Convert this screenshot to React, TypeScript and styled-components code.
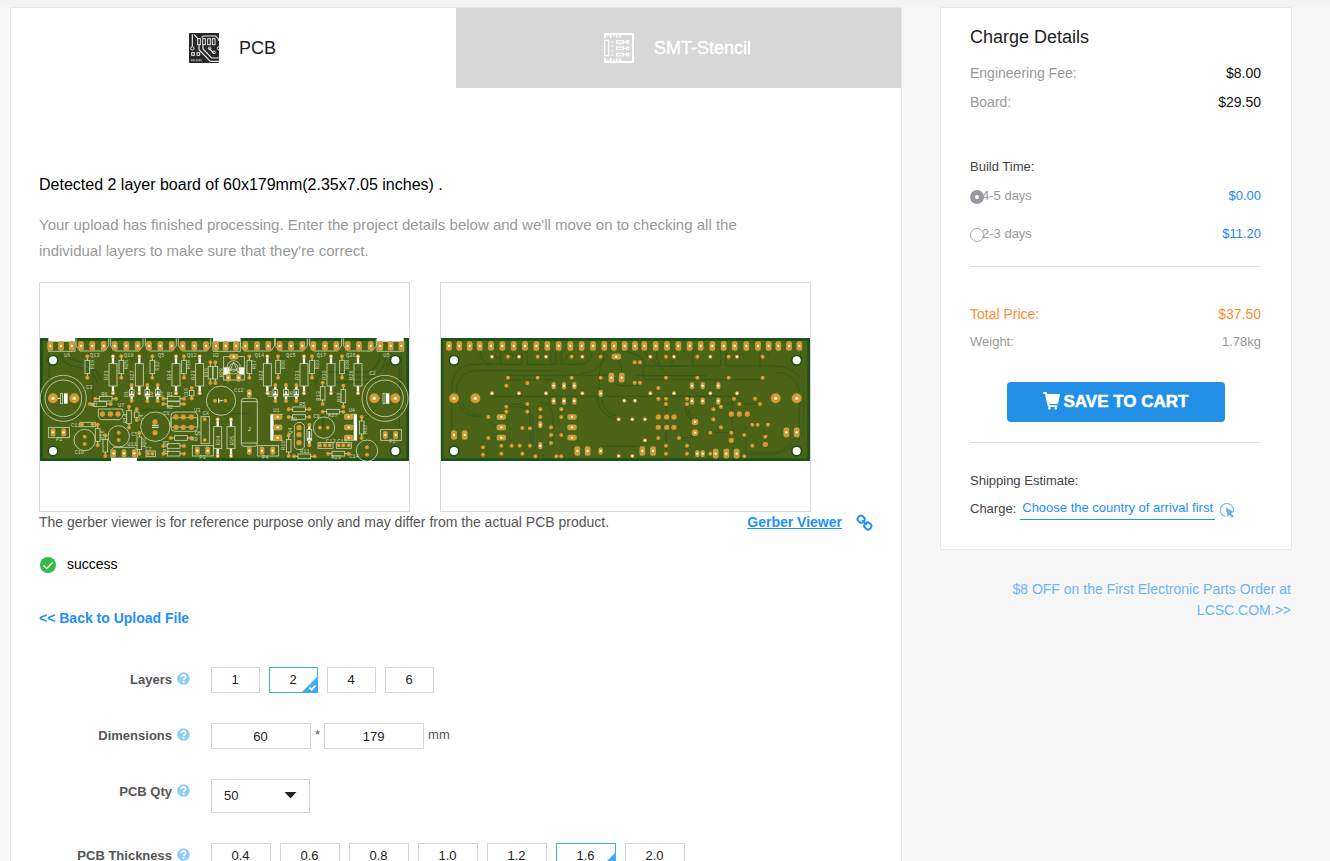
import React, { useState } from "react";
import styled, { createGlobalStyle } from "styled-components";

const GlobalStyle = createGlobalStyle`
  *, *::before, *::after { box-sizing: border-box; }
  body {
    margin: 0;
    background: #f6f6f6;
    color: #222;
    font-family: "Liberation Sans", Arial, Helvetica, sans-serif;
    font-size: 14px;
    line-height: 20px;
  }
  h1, h2, p { margin: 0; font-weight: 400; }
  button, input, select { font-family: inherit; }
`;

const TopStrip = styled.div`
  height: 7px;
  background: #f3f3f3;
`;

const Page = styled.div`
  display: grid;
  grid-template-columns: minmax(0, 1fr) 352px;
  gap: 38px;
  padding: 0 38px 0 10px;
  align-items: start;
`;

const Card = styled.section`
  background: #fff;
  border: 1px solid #e8e8e8;
`;

const Tabs = styled.nav`
  display: grid;
  grid-template-columns: 1fr 1fr;
`;

const Tab = styled.button<{ $active: boolean }>`
  display: flex;
  align-items: center;
  justify-content: center;
  gap: 20px;
  height: 80px;
  padding: 0 2px 0 0;
  border: 0;
  font-size: 18px;
  cursor: pointer;
  background: ${(p) => (p.$active ? "#fff" : "#d7d7d7")};
  color: ${(p) => (p.$active ? "#222" : "#fff")};
  -webkit-text-stroke: ${(p) => (p.$active ? "0" : "0.4px #fff")};
`;

const Content = styled.div`
  padding: 84px 28px 32px;
`;

const Detected = styled.h1`
  font-size: 16px;
  line-height: 26px;
  color: #000;
`;

const Intro = styled.p`
  max-width: 720px;
  margin-top: 14px;
  font-size: 15px;
  line-height: 26px;
  color: #999;
`;

const Previews = styled.div`
  display: flex;
  gap: 30px;
  margin-top: 18px;
`;

const Preview = styled.figure`
  display: flex;
  align-items: center;
  width: 371px;
  height: 230px;
  margin: 0;
  padding-top: 4px;
  border: 1px solid #d9d9d9;
  svg { display: block; width: 100%; }
`;

const ViewerRow = styled.div`
  display: flex;
  align-items: center;
  gap: 14px;
  color: #555;
  p { flex: 1; }
`;

const StrongLink = styled.a<{ $plain?: boolean }>`
  color: #1e90ff;
  font-weight: 700;
  text-decoration: ${(p) => (p.$plain ? "none" : "underline")};
`;

const Status = styled.p`
  display: flex;
  align-items: center;
  gap: 10px;
  margin: 22px 0 34px;
  color: #000;
  svg { margin-top: 2px; }
`;

const Form = styled.form`
  display: grid;
  gap: 30px;
  margin-top: 39px;
`;

const Row = styled.div`
  display: grid;
  grid-template-columns: 151px 1fr;
  column-gap: 21px;
  align-items: start;
`;

const RowLabel = styled.div`
  display: flex;
  align-items: center;
  justify-content: flex-end;
  gap: 5px;
  height: 26px;
  font-size: 13px;
  font-weight: 700;
  color: #555;
  svg { margin-bottom: 3px; }
`;

const Controls = styled.div<{ $gap: number }>`
  display: flex;
  align-items: center;
  gap: ${(p) => p.$gap}px;
  font-size: 13px;
  color: #555;
  span { padding-bottom: 2px; }
`;

const Option = styled.button<{ $width: number; $active: boolean }>`
  position: relative;
  width: ${(p) => p.$width}px;
  height: 26px;
  padding: 0 1px 2px 0;
  background: #fff;
  border: 1px solid ${(p) => (p.$active ? "#40a9f8" : "#d6d6d6")};
  font-size: 13px;
  color: #222;
  cursor: pointer;
  svg { position: absolute; right: -1px; bottom: -1px; }
`;

const SizeInput = styled.input`
  width: 100px;
  height: 26px;
  padding: 0 1px 0 0;
  border: 1px solid #d6d6d6;
  text-align: center;
  font-size: 13px;
  color: #222;
`;

const SelectBox = styled.div`
  position: relative;
  width: 99px;
  svg { position: absolute; right: 13px; top: 12px; pointer-events: none; }
`;

const Select = styled.select`
  appearance: none;
  display: block;
  width: 100%;
  height: 34px;
  padding: 0 12px 2px;
  border: 1px solid #d6d6d6;
  border-radius: 0;
  background: #fff;
  font-size: 13px;
  color: #222;
`;

const Summary = styled(Card)`
  padding: 18px 30px 29px 29px;
`;

const SummaryTitle = styled.h2`
  margin-bottom: 11px;
  font-size: 18px;
  line-height: 22px;
`;

const Line = styled.div<{ $tone?: "total" | "small" }>`
  display: flex;
  justify-content: space-between;
  line-height: ${(p) => (p.$tone ? 28 : 29)}px;
  font-size: ${(p) => (p.$tone === "small" ? 13 : 14)}px;
  color: ${(p) => (p.$tone === "total" ? "#ff8c2e" : "#999")};
  strong {
    font-weight: 400;
    color: ${(p) => (p.$tone ? "inherit" : "#111")};
  }
`;

const Fees = styled.div`
  margin-bottom: 40px;
`;

const SubTitle = styled.p`
  font-size: 13px;
  line-height: 20px;
  color: #444;
`;

const BuildOption = styled.label`
  display: flex;
  align-items: center;
  height: 38px;
  font-size: 13px;
  color: #999;
  cursor: pointer;
  b { margin-left: auto; font-weight: 400; color: #1e86f5; }
`;

const BuildTimes = styled.div`
  padding-bottom: 13px;
  border-bottom: 1px solid #e3e3e3;
`;

const Radio = styled.input`
  appearance: none;
  width: 14px;
  height: 14px;
  margin: 2px -2px 0 0;
  border: 1px solid #aaa;
  border-radius: 50%;
  background: #fff;
  &:checked { border: 5px solid #98989e; }
`;

const Totals = styled.div`
  padding: 33px 0 20px;
  border-bottom: 1px solid #e3e3e3;
`;

const SaveButton = styled.button`
  display: flex;
  align-items: center;
  justify-content: center;
  gap: 4px;
  width: 218px;
  height: 40px;
  margin: 26px auto 0;
  padding: 0;
  border: 0;
  border-radius: 4px;
  background: #2190e6;
  color: #fff;
  font-size: 17px;
  font-weight: 700;
  -webkit-text-stroke: 0.5px #fff;
  cursor: pointer;
  svg { margin-bottom: 3px; }
`;

const Shipping = styled.div`
  padding-top: 28px;
`;

const ChargeRow = styled.div`
  display: flex;
  align-items: center;
  margin-top: 6px;
  font-size: 13px;
  line-height: 22px;
  color: #444;
  svg { margin-left: 5px; margin-top: 4px; }
`;

const CountryLink = styled.a`
  margin-left: 4px;
  padding: 0 2px;
  border-bottom: 1px solid #1e90ff;
  color: #1e90ff;
  text-decoration: none;
`;

const Promo = styled.a`
  display: block;
  margin: 29px 1px 0 60px;
  line-height: 21px;
  text-align: right;
  text-decoration: none;
  color: #6cb4f8;
`;

/* ---------- icons ---------- */

const PcbIcon = () => (
  <svg width="30" height="30" viewBox="0 0 90 90" fill="none" stroke="#e9e9e9" strokeWidth="3.5">
    <rect width="90" height="90" rx="2" fill="#262626" stroke="none" />
    <path d="M10 4V40M15 5l12 12M38 14l5-5h37l8 8v6M30 36V50L64 85H90M42 36V48L68 75H90M66 52l9 10M60 46l8 8" />
    <g strokeWidth="3">
      <rect x="26" y="17" width="8" height="18" /><rect x="41" y="17" width="8" height="18" />
      <rect x="56" y="17" width="8" height="18" /><rect x="70" y="17" width="8" height="18" />
      <circle cx="10" cy="46" r="5" /><rect x="8" y="59" width="8" height="8" /><rect x="24" y="59" width="8" height="8" />
      <circle cx="62" cy="46" r="4" /><circle cx="75" cy="58" r="4" /><circle cx="90" cy="46" r="5" />
    </g>
    <path d="M6 82h12M20 82h18" stroke="#999" strokeWidth="6" strokeDasharray="4 1" />
  </svg>
);

const StencilIcon = () => (
  <svg width="30" height="30" viewBox="0 0 90 90" fill="none" stroke="#fff" strokeWidth="3.5">
    <path d="M0 3H87V87H0" strokeWidth="6" />
    <path d="M3 0v14M12 0v10M20 0v15M29 0v10M38 0v14M49 0v14M3 90V76M12 90v-10M20 90V75M29 90v-10M38 90V76M49 90V76" strokeWidth="5" />
    <rect x="2" y="22" width="12" height="46" />
    {[27, 46, 65].map((y) => (
      <g key={y}>
        <rect x="38" y={y - 4} width="20" height="8" />
        <path d={`M58 ${y}h8`} />
        <circle cx="71" cy={y} r="4" />
      </g>
    ))}
    {[26, 39, 53, 66].map((y) => <circle key={y} cx="25" cy={y} r="2.5" strokeWidth="2" />)}
  </svg>
);

const HelpIcon = () => (
  <svg width="13" height="13" viewBox="0 0 13 13">
    <circle cx="6.5" cy="6.5" r="6.3" fill="#8fcdfa" />
    <path d="M4.5 5.1c0-2.7 4.1-2.6 4.1-.2 0 1.6-2 1.5-2 3.1" fill="none" stroke="#fff" strokeWidth="1.7" />
    <circle cx="6.6" cy="9.9" r="1" fill="#fff" />
  </svg>
);

const SuccessIcon = () => (
  <svg width="18" height="18" viewBox="0 0 18 18">
    <circle cx="9" cy="9" r="8" fill="#33bb45" />
    <path d="M4.5 9.5l3.2 3 5.8-6" fill="none" stroke="#fff" strokeWidth="1.5" />
  </svg>
);

const LinkIcon = () => (
  <svg width="17" height="17" viewBox="0 0 17 17" fill="none" stroke="#1e90ff" strokeWidth="2">
    <rect x="1.6" y="2" width="7" height="6.4" rx="3" transform="rotate(40 5.2 5.2)" />
    <rect x="8.4" y="8.8" width="7" height="6.4" rx="3" transform="rotate(40 11.9 11.9)" />
    <path d="M6.200 6.200l4.600 4.600" strokeWidth="1.6" />
  </svg>
);

const CornerCheck = () => (
  <svg width="17" height="17" viewBox="0 0 17 17">
    <path d="M17 0V17H0z" fill="#40a9f8" />
    <path d="M8.500 11.500l2.200 2.200 3.800-4.200" fill="none" stroke="#fff" strokeWidth="1.8" />
  </svg>
);

const Caret = () => (
  <svg width="13" height="8" viewBox="0 0 13 8">
    <path d="M.5 1h12L6.500 7.500z" fill="#222" />
  </svg>
);

const CartIcon = () => (
  <svg width="17" height="18" viewBox="0 0 51 54" fill="#fff">
    <path d="M0 0h8q3 0 4 3l1 3h38l-5 26q-1 4-4 4H19l1 4h23v5H18q-3 0-4-4L6 6H2z" />
    <circle cx="19" cy="49" r="4" /><circle cx="38" cy="49" r="4" />
  </svg>
);

const ClickIcon = () => (
  <svg width="15" height="15" viewBox="0 0 45 45">
    <path d="M17 41A20 20 0 1 1 40 26" fill="none" stroke="#7dbcf0" strokeWidth="3.5" />
    <path d="M17 13l25 14-9 3 8 9-5 5-8-9-5 8z" fill="#66b1ee" />
  </svg>
);

/* ---------- board drawings ---------- */

const C = { board: "#4a6317", edge: "#1c521a", trace: "#34591a", pad: "#d8982e", halo: "#b9a752", silk: "#ced6b2", hole: "#fffbe8" };

type Pt = [number, number];

const Slot = ({ x, y, flat = false, s = 1 }: { x: number; y: number; flat?: boolean; s?: number }) => {
  const w = (flat ? 28 : 17) * s;
  const h = (flat ? 17 : 29) * s;
  return (
    <g>
      <rect x={x - w / 2} y={y - h / 2} width={w} height={h} rx={6} fill={C.halo} />
      <rect x={x - w / 2 + 2} y={y - h / 2 + 2} width={w - 4} height={h - 4} rx={5} fill={C.pad} />
      <circle cx={x} cy={y} r={3.5} fill={C.hole} />
    </g>
  );
};

const Dot = ({ x, y, r = 6, lit = false }: { x: number; y: number; r?: number; lit?: boolean }) => (
  <g>
    <circle cx={x} cy={y} r={r} fill={C.pad} />
    <circle cx={x} cy={y} r={r > 10 ? 5 : lit ? 3.5 : 1.8} fill={lit || r > 10 ? C.hole : "#e6bd6c"} />
  </g>
);

const Mount = ({ x, y }: { x: number; y: number }) => (
  <g>
    <circle cx={x} cy={y} r={17} fill={C.edge} />
    <circle cx={x} cy={y} r={12} fill="#fff" />
  </g>
);

const Part = ({ x, y, len, w = 14, flat = false, big = false, diode = false }:
  { x: number; y: number; len: number; w?: number; flat?: boolean; big?: boolean; diode?: boolean }) => {
  const inset = big ? 22 : diode ? 14 : Math.min(12, len / 4);
  return (
    <g transform={flat ? `translate(${x} ${y}) rotate(-90)` : `translate(${x} ${y})`}>
      <path d={`M0 0V${inset}M0 ${len}V${len - inset}`} stroke={big || diode ? "#fff" : C.silk} strokeWidth={big || diode ? 7 : 3} />
      <rect x={-w / 2} y={inset} width={w} height={len - 2 * inset} fill="none" stroke={C.silk} strokeWidth={2.5} />
      {diode && <path d={`M${-w / 2} ${len - inset - 5}H${w / 2}M0 ${inset + 5}V${len - inset - 3}`} stroke="#fff" strokeWidth={5} />}
      <Dot x={0} y={0} lit={big} /><Dot x={0} y={len} lit={big} />
    </g>
  );
};

/* A flat part runs to the right of its first pad. */
const FlatPart = ({ x, y, len }: { x: number; y: number; len: number }) => (
  <g>
    <path d={`M${x} ${y}h12M${x + len} ${y}h-12`} stroke={C.silk} strokeWidth={3} />
    <rect x={x + 12} y={y - 7} width={len - 24} height={14} fill="none" stroke={C.silk} strokeWidth={2.5} />
    <Dot x={x} y={y} /><Dot x={x + len} y={y} />
  </g>
);

const range = (xs: number[], y: number): Pt[] => xs.map((x) => [x, y]);
const R = 558;

const frontSlots = [43, 75, 107, 135, 169, 203, 236, 271, 305, 339, 373, 407, 440, 475, 510, 540, 569, 600,
  628, 663, 697, 731, 765, 799, 832, 867, 901, 935, 969, 1004, 1033, 1064, 1096];

const frontLabels: [number, number, string, number?][] = [
  [84, 80, "U6"], [162, 80, "Q13"], [264, 80, "Q10"], [366, 80, "Q5"], [453, 80, "Q12"], [530, 80, "U2"],
  [656, 80, "Q14"], [750, 80, "Q15"], [842, 80, "Q17"], [930, 80, "Q26"], [1042, 80, "U5"],
  [150, 176, "C3"], [1000, 136, "C2"], [594, 187, "C12"], [196, 198, "R6"], [166, 232, "R7"], [392, 198, "R1"],
  [392, 236, "R2"], [246, 230, "U7"], [382, 254, "C6"], [474, 246, "U3"], [500, 254, "C8"], [105, 292, "C11"],
  [60, 332, "P2"], [116, 372, "C10"], [286, 318, "C5"], [274, 348, "U11"], [328, 362, "C7"], [466, 332, "R9"],
  [476, 316, "Q6"], [380, 344, "R3"], [380, 368, "R4"], [490, 388, "P3"], [712, 246, "U1"], [790, 228, "R5"],
  [764, 272, "R8"], [832, 264, "C9"], [876, 262, "R27"], [938, 246, "U4"], [792, 368, "R11"], [886, 388, "R29"],
  [940, 384, "C14"], [870, 338, "C13"], [904, 338, "C15"], [1060, 340, "P1"], [678, 386, "P4"],
  [216, 150, "R21", 1], [295, 150, "R27", 1], [405, 150, "R24", 1], [476, 150, "R23", 1], [680, 150, "R22", 1],
  [790, 150, "R31", 1], [870, 150, "R30", 1], [950, 150, "R28", 1], [174, 118, "R19", 1], [275, 118, "R25", 1],
  [370, 122, "R32", 1], [463, 118, "R18", 1], [515, 142, "R15", 1], [560, 142, "R20", 1], [661, 118, "R17", 1],
  [746, 118, "R36", 1], [848, 118, "R33", 1], [939, 118, "R38", 1], [552, 346, "R34", 1], [594, 346, "R35", 1],
  [277, 202, "D1", 1], [352, 202, "D2", 1], [381, 202, "D3", 1], [456, 202, "C16", 1], [708, 202, "D5", 1],
  [771, 202, "D6", 1], [852, 212, "R13", 1], [914, 216, "R12", 1], [272, 280, "R14", 1], [320, 272, "C4", 1],
  [203, 330, "R16", 1], [330, 352, "R26", 1], [746, 360, "R10", 1], [768, 312, "Q4", 1], [992, 312, "R37", 1],
];

const FrontBoard = () => (
  <svg viewBox="12 24 1107 369" role="img" aria-label="Top side of the board">
    <rect x="12" y="24" width="1107" height="369" fill={C.edge} />
    <rect x="20" y="32" width="1091" height="353" fill={C.board} />
    <g fill="none" stroke={C.trace} strokeWidth="4">
      <path d="M75 66q0 40 50 45t60 50M90 66q5 25 45 30t60 55M40 70v90M170 110v120h110q30 5 30 30M176 225q60 5 80 40M30 250l30 10h60M316 240h180q20 5 20 30" />
      <path d="M1032 66q0 50-40 60H870q-30 5-30 40M1050 66q0 65-50 75H930M1064 66q0 75-60 90H900M1096 66v80q0 60-20 70M1090 110v180M600 66v50M560 250h80M860 240v50" />
    </g>
    <g fill="#fff">
      <rect x="37" y="23" width="80" height="12" /><rect x="531" y="23" width="82" height="12" />
      <rect x="1023" y="23" width="80" height="12" /><rect x="225" y="383" width="78" height="11" />
      <rect x="703" y="253" width="10" height="78" /><rect x="953" y="253" width="10" height="78" />
      <rect x="563" y="112" width="18" height="22" /><rect x="608" y="112" width="16" height="22" />
      <rect x="84" y="190" width="11" height="31" /><rect x="1050" y="190" width="10" height="31" />
    </g>
    <g fill="none" stroke={C.silk} strokeWidth="2.5">
      {[[120, 98], [224, 97], [328, 93], [427, 97], [613, 103], [718, 96], [821, 96], [923, 98]].map(([x, w]) => (
        <path key={x} d={`M${x} 25v22l12 16h${w - 24}l12-16V25`} />
      ))}
      <path d="M37 36v28h80V36M531 36v28h82V36M1023 36v28h80V36" />
      <circle cx="82" cy="205" r="69" /><circle cx="82" cy="205" r="55" />
      <circle cx="1047" cy="205" r="69" /><circle cx="1047" cy="205" r="55" />
      <circle cx="146" cy="330" r="32" /><circle cx="248" cy="319" r="32" />
      <circle cx="358" cy="290" r="44" /><circle cx="555" cy="212" r="44" />
      <circle cx="864" cy="293" r="32" /><circle cx="993" cy="362" r="32" />
      <circle cx="593" cy="112" r="20" /><circle cx="593" cy="112" r="12" />
      <path d="M580 128l13-32 13 32M583 118h20" />
      <rect x="563" y="80" width="62" height="70" /><rect x="74" y="190" width="6" height="31" /><rect x="1041" y="190" width="6" height="31" />
      <path d="M187 237h72q8 15 0 24l-8 8h-56l-8-8z" /><rect x="405" y="246" width="80" height="58" rx="12" />
      <rect x="405" y="263" width="80" height="28" rx="4" />
      <rect x="38" y="292" width="62" height="31" /><rect x="469" y="347" width="63" height="31" />
      <rect x="665" y="347" width="63" height="31" /><rect x="1034" y="299" width="62" height="32" />
      <rect x="495" y="260" width="25" height="81" /><rect x="616" y="205" width="48" height="144" rx="8" />
      <path d="M616 215h48M616 339h48M640 194v11M640 349v11M642 290v12h-6" /><path d="M703 253h38M703 331h38M963 253h-38M963 331h-38" />
      <path d="M775 352v-66l8-8h14l8 8v66l-8 6h-14z" /><rect x="330" y="363" width="28" height="17" />
      <rect x="846" y="338" width="45" height="17" /><rect x="901" y="338" width="45" height="17" />
      <rect x="132" y="277" width="46" height="13" /><path d="M225 384v-24l8-8h63l8 8v24" />
      <path d="M348 286h20M348 292h20M560 212h-10M548 205v14M1032 205h-20M66 205h8" strokeWidth="4" />
    </g>
    {[231, 310, 420, 491, 694, 804, 885, 966].map((x) => <Part key={x} x={x} y={79} len={111} w={24} big />)}
    {[545, 585].map((x) => <Part key={x} x={x} y={268} len={110} w={24} big />)}
    {[154, 256, 349, 444, 640, 726, 828, 918].map((x) => <Part key={x} x={x} y={79} len={64} />)}
    {[523, 538].map((x) => <Part key={x} x={x} y={97} len={62} w={13} />)}
    {[287, 334, 365, 718, 750, 781].map((x) => <Part key={x} x={x} y={165} len={48} diode />)}
    {([[860, 158, 64], [922, 167, 63], [467, 174, 31], [279, 230, 63], [302, 238, 32], [185, 284, 62], [208, 316, 62],
      [310, 309, 62], [758, 316, 62], [977, 261, 63]] as number[][]).map(([x, y, l]) => <Part key={x} x={x} y={y} len={l} />)}
    <Part x={820} y={284} len={62} diode />
    {([[178, 206], [162, 222], [382, 206], [382, 222], [404, 324], [382, 348], [382, 371], [758, 238], [758, 261],
      [860, 245], [876, 371], [774, 379]] as Pt[]).map(([x, y]) => <FlatPart key={`${x}-${y}`} x={x} y={y} len={62} />)}
    {frontSlots.map((x) => <Slot key={x} x={x} y={48} />)}
    {([...range([51, 83], 307), ...range([484, 515, 678, 710], 362), ...range([1048, 1079], 315), ...range([233, 264, 295], 370),
      [577, 143], [608, 143], [640, 190], [640, 362]] as Pt[]).map(([x, y]) => <Slot key={`${x}-${y}`} x={x} y={y} s={0.85} />)}
    {([261, 292, 323]).map((y) => <g key={y}><Slot x={725} y={y} flat /><Slot x={938} y={y} flat /></g>)}
    <Slot x={593} y={80} flat />
    {([...range([199, 223, 246], 252), ...range([420, 442, 466], 261), ...range([420, 442, 466], 292), [789, 293], [789, 314], [789, 338],
      [357, 276], [357, 308]] as Pt[]).map(([x, y]) => <Dot key={`${x}-${y}`} x={x} y={y} r={8} />)}
    {([[146, 320], [146, 342], [248, 308], [248, 330], [537, 212], [568, 212], [852, 293], [875, 293], [993, 352], [993, 374],
      [506, 268], [506, 330], [138, 283], [170, 283], [336, 371], [349, 371], ...range([852, 867, 881, 908, 922, 938], 346)] as Pt[])
      .map(([x, y]) => <Dot key={`${x}-${y}`} x={x} y={y} />)}
    {[51, 115, 1015, 1078].map((x) => <Dot key={x} x={x} y={205} r={15} />)}
    {[51, 1078].map((x) => <g key={x}><Mount x={x} y={91} /><Mount x={x} y={363} /></g>)}
    <g fill={C.silk} fontFamily="Liberation Mono, monospace" fontSize="16">
      {frontLabels.map(([x, y, t, turned]) => (
        <text key={`${t}-${x}`} x={x} y={y} transform={turned ? `rotate(-90 ${x} ${y})` : undefined}>{t}</text>
      ))}
    </g>
  </svg>
);

const backTop = [39, 70, 101, 131, 165, 199, 233, 267, 301, 334, 368, 403, 437, 471, 505, 534, 566,
  597, 625, 659, 693, 727, 761, 794, 829, 863, 896, 931, 966, 998, 1027, 1059, 1090];

const backLit: Pt[] = [
  ...range([168, 249, 330, 439], 80), ...range([85 + R, 156 + R, 265 + R, 345 + R], 80),
  ...range([168, 249, 330, 439], 190), ...range([85 + R, 156 + R, 265 + R, 345 + R], 190),
  [548, 268], [548, 378], [589, 268], [627, 268], [627, 331], [589, 378], [597, 212], [565, 212],
];

const backDots: Pt[] = [
  ...range([216, 305, 407, 494, 690, 784, 878, 980], 80), ...range([216, 305, 407, 494, 690, 784, 878, 980], 143),
  [211, 167], [274, 159], [211, 230], [274, 222], [211, 245], [274, 245], [157, 261], [157, 324], [141, 352], [141, 374],
  [196, 347], [196, 371], [227, 347], [251, 347], [282, 347], [259, 294], [282, 295], [259, 371], [298, 379], [313, 238],
  [313, 261], [376, 238], [376, 261], [345, 292], [345, 315], [345, 339], [376, 315], [361, 379], [376, 379],
  [596, 97], [612, 97], [596, 158], [612, 158], [667, 174], [667, 206], [690, 206], [690, 222], [753, 206], [753, 222],
  [667, 324], [729, 324], [690, 347], [690, 371], [753, 347], [753, 371], [894, 206], [910, 222], [957, 206], [972, 222],
  [855, 230], [832, 238], [832, 268], [855, 292], [823, 308], [886, 308], [925, 315], [949, 284], [965, 284], [996, 284],
  [988, 320], [949, 347], [925, 379], [823, 371],
];

const BackBoard = () => (
  <svg viewBox="15 24 1107 369" role="img" aria-label="Bottom side of the board">
    <rect x="15" y="24" width="1107" height="369" fill={C.edge} />
    <rect x="21" y="32" width="1093" height="353" fill={C.board} />
    <g fill="none" stroke={C.trace} strokeWidth="3">
      <path d="M47 300V170q5-66 70-67h77V62M61 190q0-65 60-68h250M131 62q0 35 37 42M165 62q5 18 30 24M199 62l45 18M194 103h64V62M274 62v41h85V62M376 62v41h60q30-5 34-41M505 62q-5 70-75 68M345 62v35M403 62l-20 35" />
      <path d="M216 136h310M260 149h90v15M216 150h40M168 199h470M47 300v15M61 300v15M68 214q10 47 60 47h28M78 214q8 35 50 42M157 261q0 20 28 30M211 230h30q35 0 42 35v50q-3 35 15 60M211 223h35q40 0 45 45v75h40q15 0 20-25M313 216q35 5 38 45v30M330 216q40 10 50 45h30M141 352v-20l16-9h40M196 323v48M408 323v40l-20 20M365 167h50M365 213h50" />
      <path d="M484 199q-3 50 55 70M497 199q0 50 45 58M520 80q-30 10-30 60v50M545 85q15 20 12 40M530 158l20 9h50q22-3 22-30V100q-3-25-40-32M558 62q50 5 70 35M625 62q10 30 55 46h72M659 62q10 55 30 68M770 62v46H610M770 108h84V62M869 62v46h103V62M972 108h50q80 5 80 80v90q0 80-90 95h-80M1022 127q65 5 68 65v100q-10 60-70 75h-80M600 137h210M625 149h345M700 199h140M766 150v20M725 62l-20 40M896 62l-24 20M931 62l-22 18M980 80l16-5v-14M558 199h350M889 199v108h-66M855 222h35M750 222v20q0 20 25 30M757 240q5 10 8 30M690 206v140M729 324h25q20 0 22-16M925 315q0-30 24-31M965 284q25 5 24 35v25M972 222h-40l-20-15M930 320v55q-5 8-20 8M494 349h130M690 347v35" />
    </g>
    {backTop.map((x) => <Slot key={x} x={x} y={48} />)}
    {backDots.map(([x, y]) => <Dot key={`${x}-${y}`} x={x} y={y} />)}
    {backLit.map(([x, y]) => <Dot key={`${x}-${y}`} x={x} y={y} lit />)}
    {([...range([886, 910, 934], 252), ...range([667, 692, 714], 261), ...range([667, 692, 714], 292), [886, 331], [988, 343]] as Pt[])
      .map(([x, y]) => <Dot key={`${x}-${y}`} x={x} y={y} r={8} />)}
    {([[777, 276], [777, 308]] as Pt[]).map(([x, y]) => <Dot key={y} x={x} y={y} r={10} lit />)}
    {([...range([353, 384, 415, 768, 800, 847], 167), ...range([353, 384, 415, 768, 800, 847], 213), [494, 190], [313, 284], [313, 347],
      [494, 363], [784, 371], [800, 371]] as Pt[]).map(([x, y]) => <Slot key={`${x}-${y}`} x={x} y={y} s={0.75} />)}
    {[261, 292, 323].map((y) => <g key={y}><Slot x={196} y={y} flat /><Slot x={408} y={y} flat /></g>)}
    <Slot x={541} y={80} flat />
    {([...range([54, 86], 315), ...range([526, 557], 143), ...range([424, 455, 619, 651], 363), ...range([839, 871, 902], 371),
      ...range([1051, 1082], 307)] as Pt[]).map(([x, y]) => <Slot key={`${x}-${y}`} x={x} y={y} />)}
    {[54, 118, 1019, 1082].map((x) => <Dot key={x} x={x} y={205} r={15} />)}
    {[54, 1082].map((x) => <g key={x}><Mount x={x} y={91} /><Mount x={x} y={363} /></g>)}
  </svg>
);

/* ---------- page ---------- */

const layerChoices = ["1", "2", "4", "6"];
const thicknessChoices = ["0.4", "0.6", "0.8", "1.0", "1.2", "1.6", "2.0"];

function OptionGroup({ label, choices, width, initial }: { label: string; choices: string[]; width: number; initial: string }) {
  const [value, setValue] = useState(initial);
  return (
    <Row role="group" aria-label={label}>
      <RowLabel>{label}<HelpIcon /></RowLabel>
      <Controls $gap={9}>
        {choices.map((c) => (
          <Option key={c} type="button" $width={width} $active={c === value} aria-pressed={c === value} onClick={() => setValue(c)}>
            {c}
            {c === value && <CornerCheck />}
          </Option>
        ))}
      </Controls>
    </Row>
  );
}

export default function App() {
  const [tab, setTab] = useState("pcb");
  return (
    <>
      <GlobalStyle />
      <TopStrip />
      <Page>
        <Card as="main">
          <Tabs>
            <Tab type="button" $active={tab === "pcb"} onClick={() => setTab("pcb")}><PcbIcon />PCB</Tab>
            <Tab type="button" $active={tab === "smt"} onClick={() => setTab("smt")}><StencilIcon />SMT-Stencil</Tab>
          </Tabs>
          <Content>
            <Detected>Detected 2 layer board of 60x179mm(2.35x7.05 inches) .</Detected>
            <Intro>
              Your upload has finished processing. Enter the project details below and we'll move on to checking all the
              individual layers to make sure that they're correct.
            </Intro>
            <Previews>
              <Preview><FrontBoard /></Preview>
              <Preview><BackBoard /></Preview>
            </Previews>
            <ViewerRow>
              <p>The gerber viewer is for reference purpose only and may differ from the actual PCB product.</p>
              <StrongLink href="#viewer">Gerber Viewer</StrongLink>
              <LinkIcon />
            </ViewerRow>
            <Status><SuccessIcon />success</Status>
            <StrongLink href="#upload" $plain>&lt;&lt; Back to Upload File</StrongLink>
            <Form>
              <OptionGroup label="Layers" choices={layerChoices} width={49} initial="2" />
              <Row>
                <RowLabel as="label" htmlFor="board-width">Dimensions<HelpIcon /></RowLabel>
                <Controls $gap={4}>
                  <SizeInput id="board-width" defaultValue="60" />
                  <span>*</span>
                  <SizeInput aria-label="Board height" defaultValue="179" />
                  <span>mm</span>
                </Controls>
              </Row>
              <Row>
                <RowLabel as="label" htmlFor="quantity">PCB Qty<HelpIcon /></RowLabel>
                <SelectBox>
                  <Select id="quantity" defaultValue="50">
                    <option>5</option><option>10</option><option>50</option><option>100</option>
                  </Select>
                  <Caret />
                </SelectBox>
              </Row>
              <OptionGroup label="PCB Thickness" choices={thicknessChoices} width={60} initial="1.6" />
            </Form>
          </Content>
        </Card>

        <aside>
          <Summary>
            <SummaryTitle>Charge Details</SummaryTitle>
            <Fees>
              <Line><span>Engineering Fee:</span><strong>$8.00</strong></Line>
              <Line><span>Board:</span><strong>$29.50</strong></Line>
            </Fees>
            <BuildTimes role="radiogroup" aria-label="Build Time">
              <SubTitle>Build Time:</SubTitle>
              <BuildOption><Radio type="radio" name="build" defaultChecked />4-5 days<b>$0.00</b></BuildOption>
              <BuildOption><Radio type="radio" name="build" />2-3 days<b>$11.20</b></BuildOption>
            </BuildTimes>
            <Totals>
              <Line $tone="total"><span>Total Price:</span><strong>$37.50</strong></Line>
              <Line $tone="small"><span>Weight:</span><strong>1.78kg</strong></Line>
              <SaveButton type="button"><CartIcon />SAVE TO CART</SaveButton>
            </Totals>
            <Shipping>
              <SubTitle>Shipping Estimate:</SubTitle>
              <ChargeRow>
                Charge:<CountryLink href="#country">Choose the country of arrival first</CountryLink><ClickIcon />
              </ChargeRow>
            </Shipping>
          </Summary>
          <Promo href="#lcsc">$8 OFF on the First Electronic Parts Order at LCSC.COM.&gt;&gt;</Promo>
        </aside>
      </Page>
    </>
  );
}
